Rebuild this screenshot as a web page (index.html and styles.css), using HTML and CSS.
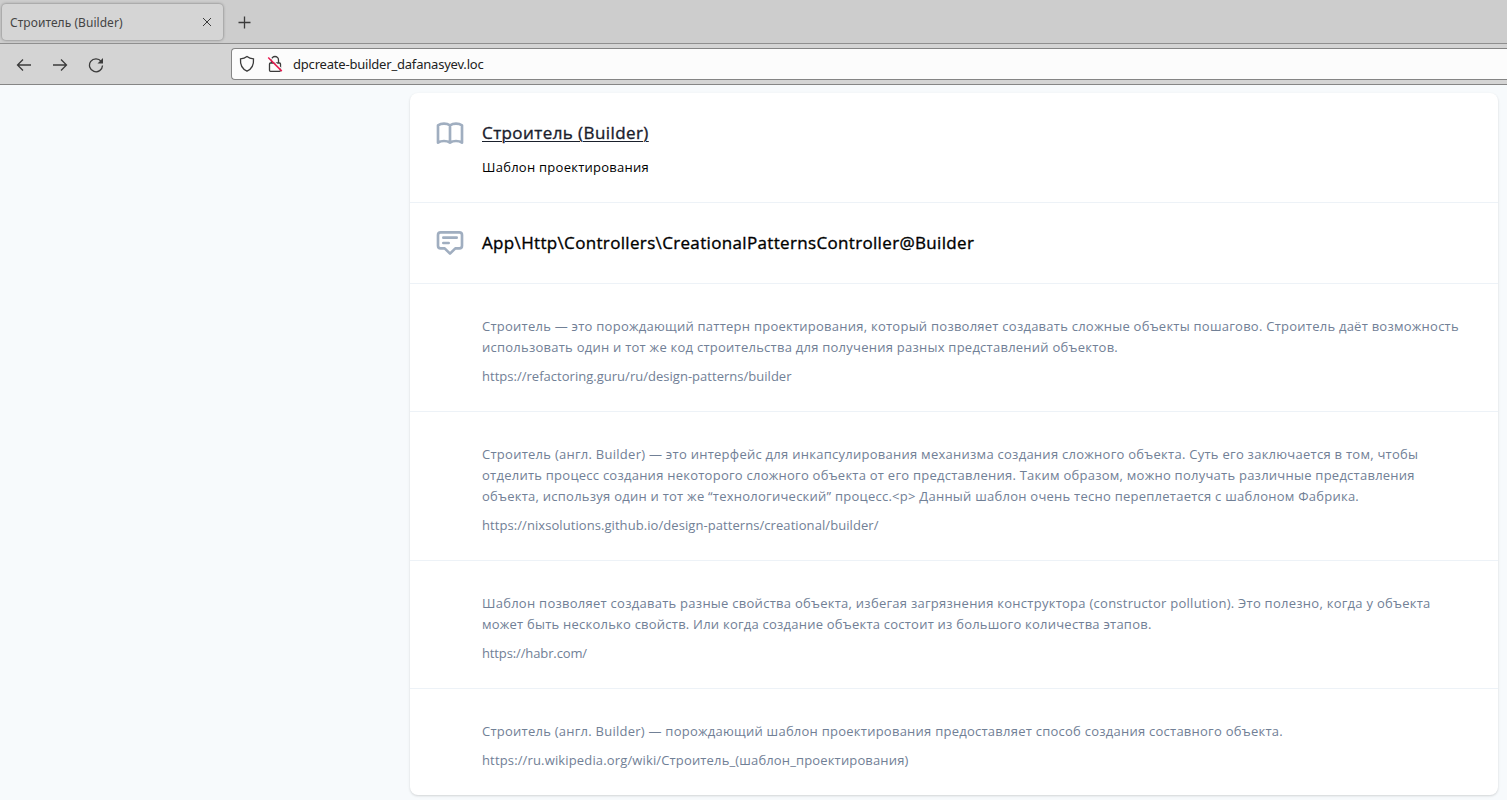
FILE: index.html
```html
<!DOCTYPE html>
<html lang="ru">
<head>
<meta charset="utf-8">
<title>Строитель (Builder)</title>
<link rel="stylesheet" href="styles.css">
</head>
<body>
<header class="browser">
  <div class="tabs">
    <div class="tab">
      <span class="tab-title">Строитель (Builder)</span>
      <svg class="close" width="10" height="10" viewBox="0 0 10 10"><path d="M1 1l8 8M9 1L1 9"/></svg>
    </div>
    <svg class="plus" width="13" height="13" viewBox="0 0 13 13"><path d="M6.5 .5v12M.5 6.5h12"/></svg>
  </div>
  <div class="toolbar">
    <svg class="nav" width="16" height="16" viewBox="0 0 16 16"><path d="M15 8H1.500M7 2.500L1.500 8 7 13.500"/></svg>
    <svg class="nav" width="16" height="16" viewBox="0 0 16 16"><path d="M1 8h13.500M9 2.500L14.500 8 9 13.500"/></svg>
    <svg class="nav" width="16" height="16" viewBox="0 0 16 16"><path d="M13.200 4.400A6.500 6.500 0 1 0 14.500 8.500"/><path class="solid" d="M15 1v5.500H9.500z"/></svg>
    <div class="urlbar">
      <svg class="shield" width="16" height="18" viewBox="0 0 16 18"><path d="M8 1.500C6.200 2.900 4 3.600 1.500 3.800c-.4 5.200.9 9.900 6.500 12.400 5.600-2.500 6.900-7.200 6.500-12.400C12 3.600 9.800 2.900 8 1.500z"/></svg>
      <svg class="lock" width="16" height="18" viewBox="0 0 16 18"><path d="M4.500 8V5a3.500 3.500 0 0 1 7 0v3M3.500 8h9a1 1 0 0 1 1 1v6.300a1 1 0 0 1-1 1h-9a1 1 0 0 1-1-1V9a1 1 0 0 1 1-1z"/><path class="gap" d="M2.300 1.600l13.500 13.500"/><path class="slash" d="M1.200 2.500l13.600 13.600"/></svg>
      <span class="address">dpcreate-builder_dafanasyev.loc</span>
    </div>
  </div>
</header>
<main class="page">
  <div class="card">
    <section class="row heading">
      <svg class="icon" viewBox="0 0 24 24"><path d="M12 6.253v13m0-13C10.832 5.477 9.246 5 7.500 5S4.168 5.477 3 6.253v13C4.168 18.477 5.754 18 7.500 18s3.332.477 4.500 1.253m0-13C13.168 5.477 14.754 5 16.500 5c1.746 0 3.332.477 4.500 1.253v13C19.832 18.477 18.246 18 16.500 18c-1.746 0-3.332.477-4.500 1.253"/></svg>
      <div>
        <h1 class="title"><a class="link" href="#">Строитель (Builder)</a></h1>
        <p class="subtitle">Шаблон проектирования</p>
      </div>
    </section>
    <section class="row">
      <svg class="icon" viewBox="0 0 24 24"><path d="M7 8h10M7 12h4m1 8l-4-4H5a2 2 0 01-2-2V6a2 2 0 012-2h14a2 2 0 012 2v8a2 2 0 01-2 2h-3l-4 4z"/></svg>
      <h2 class="title">App\Http\Controllers\CreationalPatternsController@Builder</h2>
    </section>
    <section class="row note">
      <p class="text">Строитель — это порождающий паттерн проектирования, который позволяет создавать сложные объекты пошагово. Строитель даёт возможность<br>использовать один и тот же код строительства для получения разных представлений объектов.</p>
      <p class="source">https://refactoring.guru/ru/design-patterns/builder</p>
    </section>
    <section class="row note">
      <p class="text"><span class="wide">Строитель (англ. Builder) — это интерфейс для инкапсулирования механизма создания сложного объекта. Суть его заключается в том, чтобы</span><br>отделить процесс создания некоторого сложного объекта от его представления. Таким образом, можно получать различные представления<br>объекта, используя один и тот же “технологический” процесс.&lt;p&gt; Данный шаблон очень тесно переплетается с шаблоном Фабрика.</p>
      <p class="source loose">https://nixsolutions.github.io/design-patterns/creational/builder/</p>
    </section>
    <section class="row note">
      <p class="text"><span class="wide">Шаблон позволяет создавать разные свойства объекта, избегая загрязнения конструктора (constructor pollution). Это полезно, когда у объекта</span><br><span class="narrow">может быть несколько свойств. Или когда создание объекта состоит из большого количества этапов.</span></p>
      <p class="source tight">https://habr.com/</p>
    </section>
    <section class="row note">
      <p class="text">Строитель (англ. Builder) — порождающий шаблон проектирования предоставляет способ создания составного объекта.</p>
      <p class="source mixed">https://ru.wikipedia.org/wiki/Строитель_(шаблон_проектирования)</p>
    </section>
  </div>
</main>
</body>
</html>
```
FILE: styles.css
```css
* { box-sizing: border-box; }
body {
  margin: 0;
  height: 800px;
  overflow: hidden;
  background: #f7fafc;
  font-family: "Open Sans", "Noto Sans", sans-serif;
}
svg { flex: none; fill: none; stroke: #3b3b3b; stroke-width: 1.3; }
h1, h2, p { margin: 0; }

.browser { font-family: "Noto Sans", sans-serif; color: #444; }
.tabs {
  height: 44px;
  display: flex;
  align-items: center;
  padding: 0 0 0 2px;
  background: #cdcdcd;
  border-bottom: 1px solid #8f8f8f;
}
.tab {
  width: 221px;
  height: 36px;
  display: flex;
  align-items: center;
  justify-content: space-between;
  padding: 0 11px 0 8px;
  border-radius: 4px;
  background: #d5d5d5;
  box-shadow: 0 0 3px rgba(0, 0, 0, .45);
}
.tab-title { padding-top: 1px; font-size: 12px; letter-spacing: .05px; }
.close { stroke-width: 1; }
.plus { margin-left: 15px; margin-top: 2px; }
.toolbar {
  height: 41px;
  display: flex;
  align-items: center;
  gap: 20px;
  padding-left: 16px;
  background: #d4d4d4;
  border-bottom: 1px solid #858585;
}
.nav { margin-top: 1px; }
.solid { fill: #3b3b3b; stroke: none; }
.urlbar {
  flex: 1;
  height: 32px;
  display: flex;
  align-items: center;
  margin-left: 107px;
  padding-left: 7px;
  background: #fcfcfc;
  border: 1px solid #858585;
  border-right: 0;
  border-radius: 4px 0 0 4px;
}
.lock { margin-left: 12px; }
.lock .gap { stroke: #fcfcfc; stroke-width: 1.2; }
.lock .slash { stroke: #e8194f; stroke-width: 1.5; }
.address { margin-left: 10px; font-size: 13px; letter-spacing: -.2px; color: #222; }

.page { padding: 8px 9px 0 410px; }
.card {
  border-radius: 8px;
  background: #fff;
  box-shadow: 0 1px 3px rgba(0, 0, 0, .1), 0 1px 2px rgba(0, 0, 0, .06);
}
.row { display: flex; gap: 16px; padding: 24px; }
.row + .row { border-top: 1px solid #edf2f7; }
.icon { width: 32px; height: 32px; stroke: #a0aec0; stroke-width: 2; stroke-linecap: round; stroke-linejoin: round; }
.title {
  font-size: 17px;
  font-weight: 400;
  line-height: 32px;
  letter-spacing: .336px;
  color: #000;
  -webkit-text-stroke: .35px;
}
.heading .title { letter-spacing: .42px; }
.link { color: #1a202c; text-decoration-thickness: 1px; text-underline-offset: 2px; }
.subtitle { margin-top: 8px; font-size: 13px; line-height: 21px; letter-spacing: .256px; color: #000; }
.note { display: block; padding: 32px 24px 24px 72px; }
.text, .source { font-size: 13px; line-height: 21px; white-space: nowrap; color: #718096; }
.text { letter-spacing: .247px; }
.wide { letter-spacing: .264px; }
.narrow { letter-spacing: .227px; }
.source { margin-top: 8px; letter-spacing: .022px; }
.loose { letter-spacing: .069px; }
.tight { letter-spacing: -.122px; }
.mixed { letter-spacing: .148px; }
```
